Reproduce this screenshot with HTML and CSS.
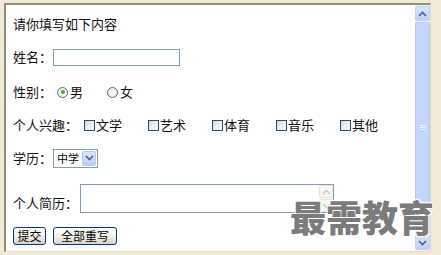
FILE: index.html
```html
<!DOCTYPE html>
<html lang="zh-CN">
<head>
<meta charset="utf-8">
<link rel="stylesheet" href="styles.css">
</head>
<body>
<div class="window">
  <form class="page">
    <div class="row r1">请你填写如下内容</div>
    <div class="row r2"><span class="lbl">姓名：</span><input class="txt" type="text"></div>
    <div class="row r3"><span class="lbl">性别：</span>
      <label class="opt"><input class="radio" type="radio" name="sex" checked>男</label>
      <label class="opt"><input class="radio" type="radio" name="sex">女</label>
    </div>
    <div class="row r4"><span class="lbl">个人兴趣：</span>
      <label class="chk"><input class="box" type="checkbox">文学</label>
      <label class="chk"><input class="box" type="checkbox">艺术</label>
      <label class="chk"><input class="box" type="checkbox">体育</label>
      <label class="chk"><input class="box" type="checkbox">音乐</label>
      <label class="chk"><input class="box" type="checkbox">其他</label>
    </div>
    <div class="row r5"><span class="lbl">学历：</span>
      <span class="sel"><select class="selbox"><option>中学</option></select><span class="selbtn"><svg width="9" height="6" viewBox="0 0 9 6"><path d="M1 1 L4.5 4.5 L8 1" fill="none" stroke="#4d6185" stroke-width="1.6"/></svg></span></span>
    </div>
    <div class="row r6"><span class="lbl lbl6">个人简历：</span>
      <span class="ta"><textarea class="tabox"></textarea><span class="tascroll"><span class="tabtn"><svg width="9" height="6" viewBox="0 0 9 6"><path d="M1 5 L4.5 1.5 L8 5" fill="none" stroke="#c9c7ba" stroke-width="1.4"/></svg></span><span class="tatrack"></span><span class="tabtn"><svg width="9" height="6" viewBox="0 0 9 6"><path d="M1 1 L4.5 4.5 L8 1" fill="none" stroke="#c9c7ba" stroke-width="1.4"/></svg></span></span></span>
    </div>
    <div class="row r7"><button class="btn b1" type="submit">提交</button><button class="btn b2" type="reset">全部重写</button></div>
  </form>
  <div class="vscroll">
    <span class="sbtn"><svg width="9" height="6" viewBox="0 0 9 6"><path d="M1 5 L4.5 1.5 L8 5" fill="none" stroke="#4d6185" stroke-width="1.6"/></svg></span>
    <span class="thumb"><span class="grip"></span></span>
    <span class="sbtn"><svg width="9" height="6" viewBox="0 0 9 6"><path d="M1 1 L4.5 4.5 L8 1" fill="none" stroke="#4d6185" stroke-width="1.6"/></svg></span>
  </div>
  <div class="mark">最需教育</div>
</div>
</body>
</html>
```
FILE: styles.css
```css
html, body {
  margin: 0;
  padding: 0;
  background: #efe9d6;
  width: 441px;
  height: 255px;
  overflow: hidden;
}
body {
  padding: 3px 0 0 4px;
  box-sizing: border-box;
  font-family: "Noto Sans CJK SC", "Noto Sans", sans-serif;
  font-size: 13px;
  color: #111;
}
.window {
  position: relative;
  width: 427px;
  height: 249px;
  box-sizing: border-box;
  border-top: 2px solid #938f80;
  border-left: 2px solid #938f80;
  border-right: 1px solid #e2ddcb;
  border-bottom: 1px solid #e2ddcb;
  background: #fff;
  display: flex;
}
.page {
  flex: 1;
  margin: 0;
  padding: 0 0 0 7px;
  display: flex;
  flex-direction: column;
}
.row {
  display: flex;
  align-items: center;
  height: 20px;
  line-height: 16px;
  white-space: nowrap;
}
.r1 { margin-top: 9px; }
.r2 { margin-top: 13px; }
.r3 { margin-top: 15px; }
.r4 { margin-top: 13px; }
.r5 { margin-top: 13px; }
.r6 { margin-top: 15px; height: 30px; align-items: flex-end; }
.r7 { margin-top: 14px; height: 18px; }
.lbl6 { margin-bottom: 2px; }
.txt {
  margin: 0 0 0 1px;
  width: 127px;
  height: 17px;
  box-sizing: border-box;
  border: 1px solid #7f9db9;
  padding: 0 2px;
  font: inherit;
  outline: none;
}
.opt {
  display: inline-flex;
  align-items: center;
  margin-right: 22px;
}
.radio {
  appearance: none;
  -webkit-appearance: none;
  margin: 0 2px 0 5px;
  width: 11px;
  height: 11px;
  border: 1px solid #4a6b8c;
  border-radius: 50%;
  background: radial-gradient(circle at 60% 65%, #ffffff 0, #e8e6dc 100%);
  box-sizing: border-box;
  position: relative;
}
.radio:checked::after {
  content: "";
  position: absolute;
  left: 2.5px;
  top: 2.5px;
  width: 4px;
  height: 4px;
  border-radius: 50%;
  background: #2fb63a;
}
.opt + .opt .radio { margin-left: 2px; }
.chk {
  display: inline-flex;
  align-items: center;
  margin-right: 26px;
}
.chk:first-of-type { margin-left: 6px; }
.box {
  appearance: none;
  -webkit-appearance: none;
  margin: 0 1px 0 0;
  width: 11px;
  height: 11px;
  border: 1px solid #1c4f7e;
  background: linear-gradient(135deg, #dcdcd4 0, #ffffff 100%);
  box-sizing: border-box;
}
.sel {
  display: inline-flex;
  margin-left: 1px;
  width: 45px;
  height: 19px;
  box-sizing: border-box;
  border: 1px solid #7f9db9;
  background: #fff;
}
.selbox {
  appearance: none;
  -webkit-appearance: none;
  border: 0;
  margin: 0;
  padding: 0 0 0 3px;
  width: 28px;
  font: inherit;
  font-size: 11px;
  background: transparent;
  outline: none;
}
.selbtn {
  margin: 1px 1px 1px 0;
  width: 14px;
  display: flex;
  align-items: center;
  justify-content: center;
  background: linear-gradient(#d9e5fd, #b8cdf6);
  border: 1px solid #b5c8f2;
  box-sizing: border-box;
  border-radius: 2px;
}
.ta {
  display: inline-flex;
  margin-left: 2px;
  width: 254px;
  height: 29px;
  box-sizing: border-box;
  border: 1px solid #7f9db9;
  background: #fff;
}
.tabox {
  flex: 1;
  border: 0;
  margin: 0;
  padding: 0;
  resize: none;
  outline: none;
  font: inherit;
}
.tascroll {
  width: 14px;
  display: flex;
  flex-direction: column;
  background: #fbfbf9;
}
.tabtn {
  height: 13px;
  display: flex;
  align-items: center;
  justify-content: center;
  border: 1px solid #e6e4da;
  border-radius: 2px;
  box-sizing: border-box;
  background: #f7f6f2;
}
.tatrack { flex: 1; }
.btn {
  margin: 0 7px 0 0;
  height: 18px;
  padding: 0;
  box-sizing: border-box;
  border: 1px solid #003c74;
  border-radius: 3px;
  background: linear-gradient(#ffffff 0, #f0efe8 55%, #d6d3c6 100%);
  font-family: "Noto Sans CJK SC", sans-serif;
  font-size: 12px;
  line-height: 14px;
  color: #000;
}
.b1 { width: 33px; }
.b2 { width: 64px; }
.vscroll {
  width: 15px;
  display: flex;
  flex-direction: column;
  padding: 1px 0;
  box-sizing: border-box;
  background: #f4f2ec;
}
.sbtn {
  height: 15px;
  display: flex;
  align-items: center;
  justify-content: center;
  box-sizing: border-box;
  border: 1px solid #c3d2f4;
  border-radius: 2px;
  background: linear-gradient(#d5e2fd, #bfd1fa);
}
.thumb {
  flex: 1;
  margin: 1px 0;
  box-sizing: border-box;
  border: 1px solid #b6c9f2;
  border-radius: 2px;
  background: #c5d6fc;
  display: flex;
  align-items: center;
  justify-content: center;
}
.grip {
  width: 6px;
  height: 6px;
  background: repeating-linear-gradient(#eef3fe 0 1px, transparent 1px 2px);
}
.mark {
  position: absolute;
  left: 284px;
  top: 191px;
  font-family: "Noto Sans CJK SC", sans-serif;
  font-weight: 900;
  font-size: 36px;
  line-height: 40px;
  color: #7b7b7b;
  letter-spacing: 0;
  text-shadow: 1px 1px 0 #fff, -1px -1px 0 #fff, 1px -1px 0 #fff, -1px 1px 0 #fff;
  white-space: nowrap;
}
```
